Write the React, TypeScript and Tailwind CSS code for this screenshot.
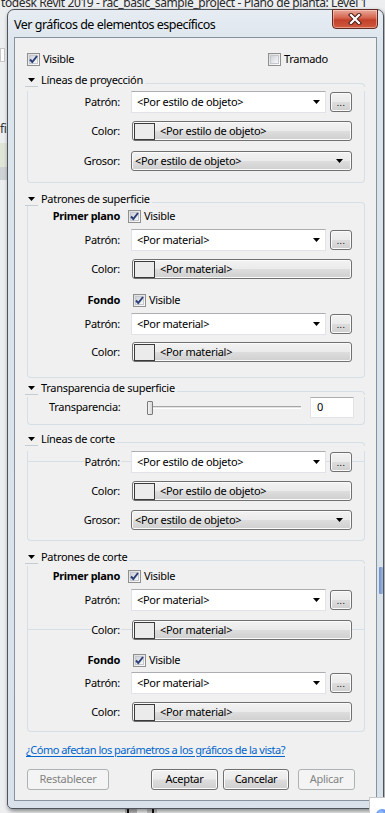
import React from "react";

// Windows 7 style "Ver gráficos de elementos específicos" dialog (Revit)

const Tri = () => (
  <svg width="7" height="4" viewBox="0 0 7 4" aria-hidden="true">
    <path d="M0 0H7L3.5 4Z" fill="#000" />
  </svg>
);

function Check({ on = true }: { on?: boolean }) {
  return (
    <span className="flex h-[13px] w-[13px] shrink-0 items-center justify-center border border-[#8f8f8f] bg-[linear-gradient(135deg,#dcdcdc,#fefefe)]">
      <span className="flex h-[9px] w-[9px] items-center justify-center overflow-visible border border-[#c3c8cf] bg-[linear-gradient(135deg,#cdd2d9,#f8f8f8)]">
        {on && (
          <svg width="11" height="11" viewBox="0 0 11 11" className="shrink-0" aria-hidden="true">
            <path d="M2 5.5L4.3 8L9 2" fill="none" stroke="#2c3f78" strokeWidth="2" />
          </svg>
        )}
      </span>
    </span>
  );
}

const btnBg =
  "border border-[#707070] rounded-[3px] bg-[linear-gradient(#f2f2f2,#ebebeb_48%,#dddddd_52%,#cfcfcf)] shadow-[inset_0_0_0_1px_#fbfbfb]";

// stray group-box line that the screenshot shows through some rows
const strayLine =
  "bg-[linear-gradient(transparent_calc(50%-1px),#d5dfe5_calc(50%-1px),#d5dfe5_50%,transparent_50%)]";

function Combo({ text }: { text: string }) {
  return (
    <div className="flex h-[22px] w-[195px] items-center border border-[#e2e3ea] border-t-[#abadb3] bg-white pl-[5px] pr-[5px]">
      <span className="flex-1 whitespace-nowrap">{text}</span>
      <Tri />
    </div>
  );
}

function Dots() {
  return (
    <div className={`ml-[4px] flex h-[20px] w-[22px] items-end justify-center pb-[4px] ${btnBg}`}>
      <span className="text-[9px] leading-none tracking-[0.5px]">...</span>
    </div>
  );
}

function ColorBtn({ text }: { text: string }) {
  return (
    <div className={`ml-[11px] flex h-[20px] w-[220px] items-center pl-[1px] ${btnBg}`}>
      <span className="h-[17px] w-[21px] border border-[#3a3a3a] bg-[#ebebeb]" />
      <span className="ml-[5px] whitespace-nowrap">{text}</span>
    </div>
  );
}

function Drop({ text }: { text: string }) {
  return (
    <div className={`ml-[10px] flex h-[20px] w-[221px] items-center pl-[3px] pr-[8px] ${btnBg}`}>
      <span className="flex-1 whitespace-nowrap">{text}</span>
      <Tri />
    </div>
  );
}

function Label({ children, bold = false }: { children: React.ReactNode; bold?: boolean }) {
  return (
    <span className={`w-[93px] shrink-0 whitespace-nowrap text-right ${bold ? "font-bold" : ""}`}>
      <span className="bg-[#f0f0f0] pr-[1px]">{children}</span>
    </span>
  );
}

function PatRow({ text, mt, line = false }: { text: string; mt: string; line?: boolean }) {
  return (
    <div className={`flex h-[22px] items-center ${mt} ${line ? strayLine : ""}`}>
      <Label>Patrón:</Label>
      <div className="ml-[10px]">
        <Combo text={text} />
      </div>
      <Dots />
    </div>
  );
}

function ColorRow({ text, mt, line = false }: { text: string; mt: string; line?: boolean }) {
  return (
    <div className={`flex h-[20px] items-center ${mt} ${line ? strayLine : ""}`}>
      <Label>Color:</Label>
      <ColorBtn text={text} />
    </div>
  );
}

function GrosorRow({ mt }: { mt: string }) {
  return (
    <div className={`flex h-[20px] items-center ${mt}`}>
      <Label>Grosor:</Label>
      <Drop text="<Por estilo de objeto>" />
    </div>
  );
}

function VisRow({ label, gap, mt }: { label: string; gap: string; mt: string }) {
  return (
    <div className={`flex h-[20px] items-center ${mt}`}>
      <Label bold>{label}</Label>
      <span className={gap}>
        <Check />
      </span>
      <span className="ml-[3px]">Visible</span>
    </div>
  );
}

function Group({ title, mt, pb, children }: { title: string; mt: string; pb: string; children: React.ReactNode }) {
  return (
    <div className={mt}>
      <div className="-ml-[2px] flex h-[14px] items-center">
        <div className="flex h-full w-[13px] items-center justify-center border-b border-[#c4ccd4]">
          <Tri />
        </div>
        <span className="ml-[3px] whitespace-nowrap">{title}</span>
        <div className="ml-[2px] h-[4px] flex-1 self-end rounded-tr-[4px] border-r border-t border-[#d5dfe5]" />
      </div>
      <div className={`rounded-b-[4px] border-x border-b border-[#d5dfe5] ${pb}`}>{children}</div>
    </div>
  );
}

function Btn({ text, w, ml, off = false }: { text: string; w: string; ml: string; off?: boolean }) {
  return (
    <div
      className={`flex h-[21px] items-center justify-center ${w} ${ml} ${
        off ? "rounded-[3px] border border-[#adb2b5] bg-[#f4f4f4] text-[#838383]" : `${btnBg} text-black`
      }`}
    >
      {text}
    </div>
  );
}

export default function App() {
  return (
    <div className="relative h-[813px] w-[385px] overflow-hidden bg-[#eceef0] font-['Noto_Sans',sans-serif] text-[11px] tracking-[-0.3px] text-black">
      {/* application behind the dialog */}
      <div className="absolute left-[1px] top-[-6px] whitespace-nowrap text-[12px] tracking-[-0.4px] text-[#2a2a2a]">
        todesk Revit 2019 - rac_basic_sample_project - Plano de planta: Level 1
      </div>
      <div className="absolute left-0 top-[48px] h-[14px] w-[5px] border border-[#c8c8c8] bg-white" />
      <div className="absolute left-0 top-[120px] text-[12px] text-[#333]">fi</div>
      <div className="absolute left-0 top-[143px] h-[24px] w-[7px] bg-[#dfe6d8]" />
      <div className="absolute left-0 top-[167px] h-[13px] w-[7px] bg-[#cfd2d4]" />
      <div className="absolute left-[125px] top-[806px] h-[7px] w-[12px] bg-[#b8b8b8]" />
      <div className="absolute left-[127px] top-[808px] h-[5px] w-[2px] bg-[#111]" />
      <div className="absolute left-[147px] top-[806px] h-[7px] w-[10px] bg-[#c4c4c4]" />
      <div className="absolute left-[152px] top-[808px] h-[5px] w-[2px] bg-[#111]" />

      {/* dialog window */}
      <div className="absolute left-[7px] top-[9px] flex h-[800px] w-[377px] flex-col rounded-t-[7px] rounded-b-[5px] border border-[#4d545c] bg-[linear-gradient(#e6ecf2,#dce4ec_40px,#d9e1ea)] px-[6px] pb-[7px] shadow-[1px_2px_4px_rgba(0,0,0,0.45)]">
        <div className="flex h-[27px] shrink-0 items-start">
          <span className="mt-[6px] whitespace-nowrap text-[12.5px] leading-[18px] tracking-[-0.5px] text-black">
            Ver gráficos de elementos específicos
          </span>
          <div className="-mr-[1px] -mt-[1px] ml-auto flex h-[20px] w-[46px] items-center justify-center rounded-b-[4px] border border-[#5e2a22] bg-[linear-gradient(#e9a99a,#d4624c_45%,#c2402a_55%,#cf5a3f)] shadow-[inset_0_0_0_1px_rgba(255,220,210,0.5)]">
            <svg width="14" height="12" viewBox="0 0 14 12" aria-hidden="true">
              <path d="M3 2L11 10M11 2L3 10" stroke="#4a1f18" strokeWidth="4.2" strokeLinecap="square" />
              <path d="M3 2L11 10M11 2L3 10" stroke="#fff" strokeWidth="2.2" strokeLinecap="square" />
            </svg>
          </div>
        </div>

        {/* client area */}
        <div className="flex flex-1 flex-col border border-[#8592a0] bg-[#f0f0f0] pl-[12px] pr-[11px]">
          <div className="mt-[15px] flex h-[13px] items-center">
            <span className="flex w-[241px] items-center">
              <Check />
              <span className="ml-[3px]">Visible</span>
            </span>
            <Check on={false} />
            <span className="ml-[3px]">Tramado</span>
          </div>

          <Group title="Líneas de proyección" mt="mt-[7px]" pb="pb-[11px]">
            <PatRow text="<Por estilo de objeto>" mt="mt-[4px]" />
            <ColorRow text="<Por estilo de objeto>" mt="mt-[8px]" />
            <GrosorRow mt="mt-[10px]" />
          </Group>

          <Group title="Patrones de superficie" mt="mt-[9px]" pb="pb-[15px]">
            <VisRow label="Primer plano" gap="ml-[7px]" mt="mt-0" />
            <PatRow text="<Por material>" mt="mt-[3px]" />
            <ColorRow text="<Por material>" mt="mt-[8px]" />
            <VisRow label="Fondo" gap="ml-[12px]" mt="mt-[11px]" />
            <PatRow text="<Por material>" mt="mt-[3px]" />
            <ColorRow text="<Por material>" mt="mt-[7px]" />
          </Group>

          <Group title="Transparencia de superficie" mt="mt-[3px]" pb="pb-[6px]">
            <div className="mt-[2px] flex h-[21px] items-center pl-[21px]">
              <span className="w-[98px] shrink-0">Transparencia:</span>
              <span className="h-[14px] w-[6px] rounded-[1px] border border-[#7a7a7a] bg-[linear-gradient(90deg,#f4f4f4,#d8d8d8)]" />
              <span className="h-[3px] w-[148px] border-b border-t border-[#a6a6a6] border-b-[#ffffff] bg-[#e3e3e3]" />
              <div className="ml-[9px] flex h-[21px] w-[44px] items-center border border-[#e2e3ea] border-t-[#abadb3] bg-white pl-[6px]">
                0
              </div>
            </div>
          </Group>

          <Group title="Líneas de corte" mt="mt-[7px]" pb="pb-[10px]">
            <PatRow text="<Por estilo de objeto>" mt="mt-[5px]" line />
            <ColorRow text="<Por estilo de objeto>" mt="mt-[8px]" />
            <GrosorRow mt="mt-[9px]" />
          </Group>

          <Group title="Patrones de corte" mt="mt-[9px]" pb="pb-[9px]">
            <VisRow label="Primer plano" gap="ml-[7px]" mt="mt-[2px]" />
            <PatRow text="<Por material>" mt="mt-[3px]" />
            <ColorRow text="<Por material>" mt="mt-[9px]" line />
            <VisRow label="Fondo" gap="ml-[12px]" mt="mt-[10px]" />
            <PatRow text="<Por material>" mt="mt-[2px]" />
            <ColorRow text="<Por material>" mt="mt-[8px]" />
          </Group>

          <div className="-ml-[1px] mt-[11px] flex h-[14px] items-center">
            <a className="whitespace-nowrap tracking-[-0.5px] text-[#0066cc] underline underline-offset-2" href="#">
              ¿Cómo afectan los parámetros a los gráficos de la vista?
            </a>
          </div>

          <div className="mt-[12px] flex">
            <Btn text="Restablecer" w="w-[82px]" ml="ml-0" off />
            <Btn text="Aceptar" w="w-[67px]" ml="ml-[42px]" />
            <Btn text="Cancelar" w="w-[66px]" ml="ml-[5px]" />
            <Btn text="Aplicar" w="w-[57px]" ml="ml-[9px]" off />
          </div>
        </div>
      </div>

      {/* things in front of / seen through the frame */}
      <div className="absolute left-[379px] top-[567px] h-[27px] w-[4px] rounded-[1px] bg-[linear-gradient(90deg,#6d8fc7,#9fb8df)]" />
      <div className="absolute left-[369px] top-[797px] flex h-[20px] w-[20px] items-end justify-center border border-[#c9c9c9] bg-white">
        <span className="mb-[-5px] ml-[6px] h-[12px] w-[12px] rounded-full bg-[radial-gradient(circle_at_40%_35%,#9cc4ff,#1d5bd6)]" />
      </div>
    </div>
  );
}
